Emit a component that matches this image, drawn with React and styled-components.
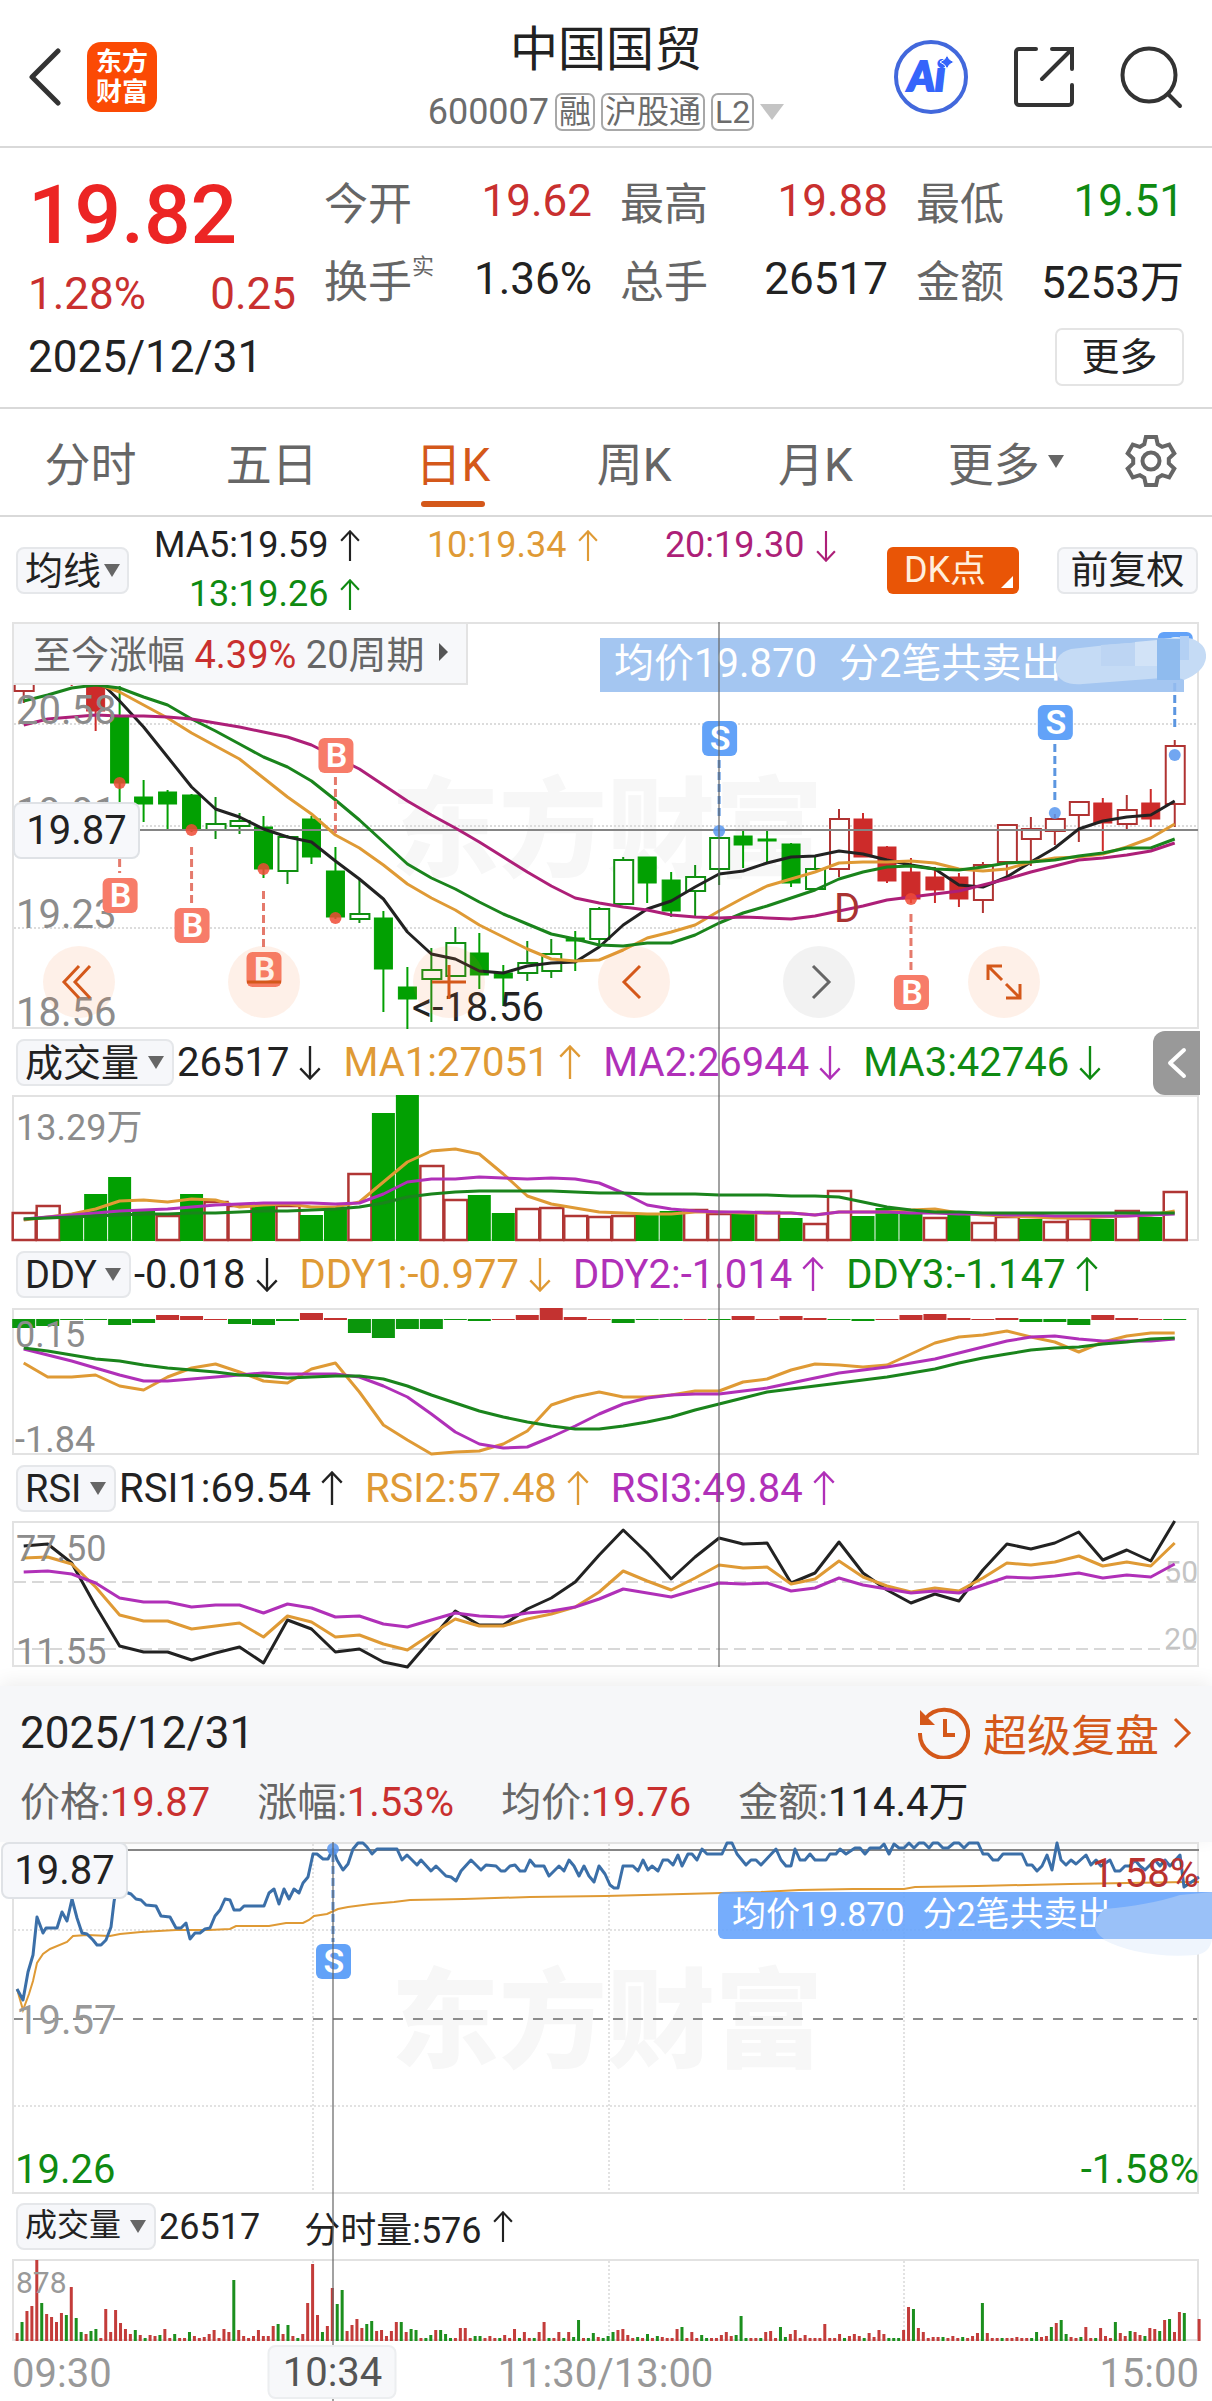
import React from 'react';
import styled, { createGlobalStyle } from 'styled-components';

const GlobalStyle = createGlobalStyle`
* { box-sizing: border-box; }
body {
  margin: 0;
  background: #fff;
  color: #222;
  font-family: Roboto, "Noto Sans CJK SC", sans-serif;
  font-weight: 400;
}
button, select {
  font-family: inherit;
  font-weight: inherit;
  color: inherit;
}
button {
  border: 0;
  padding: 0;
  background: none;
  cursor: pointer;
}
svg { display: block; }
`

const red = '#c9302f';
const green = '#0f8a12';
const orange = '#df9a35';
const purple = '#b030b8';
const magenta = '#ad1f78';
const brand = '#d4581a';

const Page = styled.main`
overflow: hidden;
`

/* ---- header ---- */
const Header = styled.header`
display: grid;
grid-template-columns: 1fr auto 1fr;
align-items: center;
height: 148px;
padding: 0 28px;
border-bottom: 2px solid #d9d9d9;
`
const HeaderSide = styled.div`
display: flex;
align-items: center;
justify-content: ${(p) => (p.$end ? 'flex-end' : 'flex-start')};
gap: ${(p) => (p.$end ? '46px' : '26px')};
padding-top: 8px;
`
const Logo = styled.div`
width: 70px;
height: 70px;
padding-top: 5px;
border-radius: 14px;
background: #fb4a04;
color: #fff;
font-size: 26px;
font-weight: 700;
line-height: 30px;
text-align: center;
`
const TitleBox = styled.div`
padding-top: 16px;
text-align: center;
h1 {
  margin: 0;
  font-size: 48px;
  font-weight: 400;
  line-height: 62px;
}
`
const SubTitle = styled.div`
display: flex;
align-items: center;
justify-content: center;
gap: 6px;
height: 62px;
color: #6c6c6c;
font-size: 36px;
`
const Tag = styled.span`
height: 38px;
padding: 0 2px;
border: 2px solid #a8a8a8;
border-radius: 7px;
font-size: 32px;
line-height: 34px;
`
const Triangle = styled.i`
flex: none;
width: 0;
height: 0;
border-left: ${(p) => p.$w || 8}px solid transparent;
border-right: ${(p) => p.$w || 8}px solid transparent;
border-top: ${(p) => p.$h || 13}px solid ${(p) => p.$color || '#666'};
`

/* ---- quote ---- */
const Quote = styled.section`
padding: 14px 28px 11px;
border-bottom: 2px solid #d9d9d9;
`
const QuoteGrid = styled.div`
display: grid;
grid-template-columns: repeat(4, 1fr);
grid-template-rows: 78px 78px;
column-gap: 28px;
font-size: 44px;
`
const PriceBox = styled.div`
grid-row: span 2;
color: ${red};
strong {
  display: block;
  color: #ec2524;
  font-size: 82px;
  font-weight: 500;
  line-height: 106px;
}
div {
  display: flex;
  justify-content: space-between;
  line-height: 52px;
}
`
const Stat = styled.div`
display: flex;
align-items: center;
justify-content: space-between;
color: ${(p) => p.$color || '#222'};
span { color: #666; white-space: nowrap; }
sup {
  font-size: 22px;
  line-height: 0;
  vertical-align: 24px;
}
`
const DateRow = styled.div`
display: flex;
align-items: center;
justify-content: space-between;
height: 78px;
font-size: 44px;
`
const MoreButton = styled.button`
height: 58px;
width: 129px;
border: 2px solid #e4e4e4;
border-radius: 7px;
font-size: 38px;
line-height: 50px;
`

/* ---- tabs ---- */
const Tabs = styled.nav`
display: flex;
height: 108px;
padding-right: 16px;
border-bottom: 2px solid #d9d9d9;
`
const Tab = styled.button`
position: relative;
display: flex;
flex: ${(p) => p.$grow || 10};
align-items: center;
justify-content: center;
gap: 8px;
padding-bottom: 2px;
color: ${(p) => (p.$active ? brand : '#666')};
font-size: 46px;
&::after {
  content: '';
  position: absolute;
  bottom: 8px;
  width: 64px;
  height: 6px;
  border-radius: 3px;
  background: ${(p) => (p.$active ? brand : 'transparent')};
}
`

/* ---- moving averages ---- */
const AverageBar = styled.div`
display: flex;
align-items: center;
justify-content: space-between;
padding: 4px 14px 3px 16px;
`
const AverageGrid = styled.div`
display: grid;
flex: 1;
grid-template-columns: repeat(3, 1fr);
max-width: 714px;
margin-left: -7px;
justify-items: end;
font-size: 36px;
line-height: 49px;
`
const Reading = styled.span`
display: flex;
align-items: center;
gap: 10px;
color: ${(p) => p.$color || '#222'};
white-space: nowrap;
`
const AverageButtons = styled.div`
display: flex;
gap: 38px;
margin-left: 50px;
`
const DkButton = styled.button`
position: relative;
width: 132px;
height: 47px;
padding-right: 16px;
border-radius: 6px;
background: #e95506;
color: #ffeedd;
font-size: 36px;
line-height: 44px;
&::after {
  content: '';
  position: absolute;
  right: 6px;
  bottom: 6px;
  border-left: 12px solid transparent;
  border-bottom: 12px solid #fff;
}
`
const GreyButton = styled.button`
height: 47px;
width: 141px;
border: 2px solid #e5e7ea;
border-radius: 7px;
background: #f7f8fb;
font-size: 38px;
line-height: 40px;
`
const SelectBox = styled.label`
position: relative;
display: flex;
align-items: center;
i { position: absolute; right: ${(p) => (p.$tight ? 9 : 10)}px; pointer-events: none; }
select {
  height: 47px;
  padding: 0 ${(p) => (p.$tight ? 25 : 32)}px 4px 7px;
  border: 2px solid #e5e7ea;
  border-radius: 8px;
  background: #f6f7fa;
  font-size: ${(p) => (p.$small ? 32 : 38)}px;
  appearance: none;
}
`

/* ---- charts ---- */
const Charts = styled.section`
position: relative;
padding: 0 13px 19px 12px;
`
const Frame = styled.div`
position: relative;
svg { width: 100%; height: auto; overflow: visible; }
`
const IndicatorRow = styled.div`
display: flex;
align-items: center;
gap: ${(p) => p.$gap || 22}px;
height: ${(p) => p.$h || 66}px;
padding-left: 4px;
font-size: ${(p) => p.$size || 40}px;
label { margin-right: ${(p) => 3 - (p.$gap || 22)}px; }
`
const CrossLine = styled.div`
position: absolute;
z-index: 2;
top: 0;
bottom: ${(p) => p.$bottom || 0}px;
left: ${(p) => p.$left};
width: 2px;
background: rgba(100, 100, 100, 0.6);
`
const GainStrip = styled.button`
position: absolute;
top: 0;
left: 0;
display: flex;
align-items: center;
gap: 14px;
height: 63px;
padding: 0 18px 4px 19px;
border: 2px solid #e3e3e3;
background: #f7f8fa;
color: #666;
font-size: 38px;
em { color: ${red}; font-style: normal; }
i {
  border-top: 9px solid transparent;
  border-bottom: 9px solid transparent;
  border-left: 9px solid #555;
}
`
const PriceTag = styled.output`
position: absolute;
top: ${(p) => p.$top}px;
left: ${(p) => p.$left}px;
width: 127px;
height: 57px;
border: 2px solid #dfe2e6;
border-radius: 8px;
background: #f7f8fb;
font-size: 40px;
line-height: 54px;
text-align: center;
`
const TradeTip = styled.div`
position: absolute;
top: ${(p) => (p.$small ? 50 : 16)}px;
right: ${(p) => (p.$small ? -13 : 15)}px;
display: flex;
gap: ${(p) => (p.$small ? 18 : 22)}px;
width: ${(p) => (p.$small ? 494 : 584)}px;
height: ${(p) => (p.$small ? 47 : 54)}px;
padding-left: 14px;
border-radius: ${(p) => (p.$small ? '6px 0 0 6px' : 0)};
background: ${(p) => (p.$small ? 'rgba(103, 164, 252, 0.9)' : 'rgba(151, 190, 239, 0.88)')};
color: #fff;
font-size: ${(p) => (p.$small ? 34 : 40)}px;
line-height: ${(p) => (p.$small ? 44 : 52)}px;
white-space: nowrap;
svg {
  position: absolute;
  top: ${(p) => (p.$small ? 7 : -14)}px;
  right: ${(p) => (p.$small ? 0 : -23)}px;
  width: auto;
}
`
const RoundBar = styled.div`
position: absolute;
top: 324px;
left: 31px;
display: flex;
gap: 113px;
`
const RoundButton = styled.button`
display: flex;
align-items: center;
justify-content: center;
width: 72px;
height: 72px;
border-radius: 50%;
background: ${(p) => (p.$grey ? 'rgba(110, 110, 110, 0.09)' : 'rgba(250, 120, 50, 0.11)')};
color: ${(p) => (p.$grey ? '#666' : brand)};
&& svg { width: 40px; height: 40px; }
`
const SideTab = styled.button`
position: absolute;
top: 409px;
right: 12px;
display: flex;
align-items: center;
justify-content: center;
width: 47px;
height: 64px;
border-radius: 12px 0 0 12px;
background: #999;
`

/* ---- intraday panel ---- */
const PanelHead = styled.section`
position: relative;
padding: 20px 20px 4px;
background: #f6f7f9;
box-shadow: 0 -4px 18px rgba(0, 0, 0, 0.07);
`
const PanelTitle = styled.div`
display: flex;
align-items: center;
justify-content: space-between;
height: 54px;
font-size: 44px;
`
const Replay = styled.a`
display: flex;
align-items: center;
gap: 13px;
color: ${brand};
text-decoration: none;
`
const PanelFigures = styled.div`
display: flex;
align-items: center;
gap: 47px;
height: 78px;
font-size: 40px;
span { color: #666; }
b { color: ${red}; font-weight: 400; }
b.plain { color: #222; }
`
const Intraday = styled.section`
position: relative;
padding: 0 13px 0 12px;
`
const TimeAxis = styled.div`
position: relative;
display: flex;
align-items: center;
justify-content: space-between;
height: 60px;
padding-top: 4px;
color: #999;
font-size: 40px;
`
const TimeTag = styled.output`
position: absolute;
z-index: 3;
bottom: 2px;
left: 27%;
width: 129px;
height: 54px;
transform: translateX(-50%);
border: 2px solid #eceef0;
border-radius: 8px;
background: #f7f8fa;
color: #555;
font-size: 40px;
line-height: 52px;
text-align: center;
`

/* ---- data: 49 daily bars, pixel heights inside each chart ---- */
// kind (g/G down solid/hollow, r/R up solid/hollow), body top, body bottom, high, low
const candles = [
  ['R', 40, 69, 30, 81], null, ['r', 20, 50, 20, 64], ['r', 50, 89, 50, 109],
  ['g', 94, 161, 64, 180], ['g', 175, 182, 158, 200], ['g', 170, 182, 168, 209], ['g', 173, 208, 172, 210],
  ['G', 202, 208, 175, 217], ['G', 199, 204, 191, 212], ['g', 205, 247, 194, 256], ['G', 215, 249, 213, 262],
  ['g', 197, 235, 194, 242], ['g', 249, 295, 225, 297], ['G', 292, 297, 257, 301], ['g', 296, 347, 289, 390],
  ['g', 365, 377, 345, 407], ['G', 348, 357, 326, 400], ['G', 321, 354, 305, 354], ['g', 331, 353, 311, 367],
  ['g', 351, 356, 343, 384], ['G', 341, 351, 319, 359], ['G', 332, 349, 317, 356], ['g', 316, 319, 309, 349],
  ['G', 287, 317, 285, 325], ['G', 238, 282, 235, 283], ['g', 235, 261, 235, 281], ['g', 258, 289, 250, 295],
  ['G', 255, 269, 243, 294], ['G', 216, 247, 215, 263], ['g', 214, 223, 208, 246], ['g', 217, 219, 207, 240],
  ['g', 222, 261, 221, 265], ['G', 247, 267, 234, 267], ['R', 197, 247, 187, 255], ['r', 197, 235, 191, 235],
  ['r', 225, 259, 224, 261], ['r', 250, 277, 236, 281], ['r', 255, 268, 245, 281], ['r', 255, 277, 251, 285],
  ['R', 243, 278, 240, 291], ['R', 203, 240, 202, 257], ['R', 207, 217, 195, 244], ['R', 197, 209, 192, 223],
  ['R', 180, 193, 179, 220], ['r', 181, 201, 176, 229], ['R', 188, 202, 173, 207], ['r', 181, 197, 167, 205],
  ['R', 124, 182, 118, 205],
];
const ma5 = [null, null, null, 55, 79, 105, 135, 165, 187, 195, 207, 215, 220, 239, 257, 277, 310, 332, 337, 349, 351, 344, 341, 340, 325, 303, 287, 279, 265, 252, 249, 241, 235, 234, 229, 232, 238, 243, 247, 263, 265, 255, 240, 226, 207, 199, 195, 193, 179];
const ma10 = [null, null, null, 61, 70, 83, 96, 111, 124, 137, 156, 175, 192, 213, 226, 243, 262, 276, 288, 303, 315, 327, 337, 339, 338, 328, 316, 310, 303, 289, 276, 264, 257, 250, 241, 240, 240, 239, 241, 247, 249, 247, 240, 236, 235, 232, 225, 216, 202];
const ma13 = [79, 73, 66, 63, 66, 75, 83, 97, 109, 122, 135, 145, 159, 178, 198, 220, 242, 256, 267, 280, 292, 302, 312, 317, 323, 324, 321, 321, 313, 301, 291, 284, 276, 268, 257, 250, 245, 244, 247, 248, 245, 241, 240, 238, 234, 231, 226, 226, 217];
const ma20 = [103, 97, 95, 93, 94, 94, 95, 97, 101, 105, 110, 115, 123, 135, 147, 163, 179, 193, 206, 220, 235, 250, 264, 276, 281, 285, 288, 293, 295, 296, 295, 296, 297, 294, 289, 284, 278, 275, 272, 269, 263, 257, 250, 244, 238, 236, 233, 229, 221];

const volumes = 'R29 R36 g25 g47 g64 g30 R26 g47 R40 R36 g36 R36 g26 g33 R68 g128 g146 R76 R42 g46 g28 R33 R34 R26 R25 R26 g26 g30 R32 R28 g28 R30 g23 R18 R51 g25 g33 g29 R24 g26 R19 R25 g22 R20 R23 g22 R31 g24 R50';
const vol1 = [125, 122, 119, 114, 106, 105, 107, 104, 105, 112, 110, 109, 112, 112, 107, 87, 67, 56, 54, 59, 79, 101, 109, 113, 117, 118, 119, 119, 117, 117, 118, 118, 118, 120, 117, 117, 117, 115, 114, 118, 120, 121, 122, 123, 123, 122, 121, 120, 116];
const vol2 = [124, 122, 120, 118, 116, 115, 114, 112, 110, 109, 108, 108, 108, 109, 108, 99, 87, 84, 84, 82, 83, 84, 83, 84, 88, 98, 110, 114, 116, 117, 117, 118, 118, 120, 117, 117, 117, 118, 118, 119, 119, 120, 120, 121, 121, 121, 121, 120, 119];
const vol3 = [124, 123, 122, 121, 120, 119, 119, 118, 118, 117, 116, 116, 115, 114, 112, 108, 102, 99, 97, 96, 96, 96, 96, 97, 98, 98, 99, 99, 99, 100, 100, 100, 101, 101, 102, 107, 112, 115, 117, 117, 118, 118, 118, 118, 118, 118, 118, 118, 118];

const ddyBars = [-9, -7, -1, -1, -6, -4, 5, 4, 1, -5, -6, -2, 7, 2, -14, -19, -10, -10, -1, -2, 1, 5, 12, 3, 1, -4, -1, -1, 1, -1, 4, 1, 4, 2, -1, -2, 1, 5, 6, 2, 1, 2, -3, -3, -6, 5, 2, 1, -1];
const ddy1 = [55, 69, 69, 67, 78, 82, 69, 60, 56, 64, 73, 75, 61, 55, 84, 117, 132, 146, 144, 143, 136, 123, 97, 89, 84, 89, 89, 87, 83, 83, 74, 71, 62, 56, 57, 59, 57, 46, 35, 29, 27, 23, 29, 34, 44, 34, 28, 25, 25];
const ddy2 = [41, 47, 53, 60, 67, 73, 73, 71, 69, 67, 65, 66, 66, 66, 69, 78, 89, 106, 124, 136, 140, 139, 129, 118, 106, 96, 90, 87, 86, 86, 83, 80, 75, 70, 65, 62, 59, 55, 51, 45, 39, 33, 29, 28, 31, 33, 33, 33, 31];
const ddy3 = [40, 43, 47, 51, 53, 57, 60, 62, 64, 67, 68, 70, 69, 68, 68, 71, 78, 87, 95, 103, 109, 114, 118, 121, 121, 118, 114, 109, 102, 96, 90, 84, 81, 78, 75, 72, 69, 65, 61, 55, 50, 46, 42, 40, 39, 36, 34, 31, 30];

const rsi1 = [25, 23, 42, 85, 125, 131, 131, 139, 132, 126, 142, 99, 108, 131, 128, 141, 146, 118, 90, 104, 104, 88, 77, 61, 34, 9, 32, 58, 36, 17, 23, 22, 62, 52, 21, 52, 69, 82, 73, 80, 49, 23, 28, 22, 11, 39, 29, 40, 0];
const rsi2 = [37, 36, 43, 66, 94, 100, 100, 108, 105, 102, 116, 95, 101, 116, 114, 123, 129, 113, 98, 105, 105, 98, 93, 86, 71, 50, 60, 69, 57, 44, 47, 46, 63, 58, 40, 56, 65, 71, 67, 70, 57, 42, 44, 41, 35, 45, 41, 45, 22];
const rsi3 = [51, 50, 53, 62, 77, 81, 81, 86, 84, 84, 92, 83, 87, 96, 95, 103, 106, 99, 92, 95, 96, 92, 90, 86, 78, 68, 72, 76, 69, 62, 63, 62, 70, 67, 57, 64, 68, 72, 70, 72, 64, 56, 57, 55, 52, 57, 54, 56, 43];

// one day, minute by minute
const pricePath = '5,147 11,158 16,130 21,113 25,75 31,91 34,86 45,86 50,70 55,79 60,57 65,76 70,91 75,92 81,98 85,103 89,103 94,98 99,85 102,60 104,48 109,46 116,51 119,52 124,57 129,58 134,63 144,64 149,74 158,75 164,86 169,86 174,81 178,97 183,91 188,91 193,87 198,86 203,74 208,68 213,57 218,58 222,68 228,68 232,64 252,64 257,51 262,47 267,62 272,47 277,57 282,47 287,51 291,41 296,35 301,12 305,12 311,17 316,17 321,7 325,18 331,28 336,22 341,7 346,1 351,1 355,5 360,12 365,7 385,7 390,18 395,13 405,23 409,18 419,29 424,24 434,34 439,35 444,39 449,29 459,18 469,28 474,23 484,24 489,29 493,29 498,24 503,23 508,29 513,29 518,18 523,24 532,24 537,34 547,24 552,29 557,18 562,24 567,34 572,24 577,34 582,40 587,24 593,32 598,43 602,46 606,46 611,24 621,24 626,29 631,18 636,28 640,24 646,29 651,18 656,18 661,23 666,13 670,24 676,12 680,12 685,18 690,7 695,12 710,12 715,1 720,1 725,12 734,23 739,18 744,18 749,23 764,7 769,18 774,24 779,24 783,7 788,18 793,18 798,12 803,18 814,18 818,12 824,12 828,7 834,12 843,6 848,6 853,12 858,6 868,6 872,2 877,12 882,2 887,6 892,6 897,1 902,6 907,1 912,1 917,6 921,1 926,1 931,6 936,6 942,1 947,1 952,6 957,1 966,1 971,12 976,12 981,18 986,18 991,12 1010,12 1015,23 1020,23 1025,29 1030,24 1035,13 1040,28 1045,1 1049,18 1054,23 1059,18 1064,22 1074,13 1079,23 1084,18 1089,24 1098,18 1103,29 1108,29 1113,24 1118,24 1123,18 1128,24 1133,28 1143,18 1148,24 1153,18 1158,24 1168,13 1172,45 1187,35';
const averagePath = '5,147 11,168 17,152 21,139 25,121 31,112 38,107 55,100 61,94 75,93 98,94 108,92 129,90 164,88 197,88 218,87 224,84 257,84 274,81 291,81 297,78 302,74 315,72 326,67 336,65 359,62 382,60 398,58 452,57 518,55 593,54 671,52 749,50 787,48 841,47 892,47 903,45 965,44 1058,42 1174,40 1187,40';
const minuteBars = 'r8 g19 r30 r35 r81 g38 r27 r24 r19 r28 g26 r54 g23 g9 r7 g10 g12 r3 r32 r9 r31 r18 r12 r7 g11 r6 g3 r6 r5 g6 r12 r3 g7 r3 r3 g9 r5 r3 r4 r7 r11 r3 r12 r9 g61 r11 r5 r3 r5 r11 r5 r5 r15 g17 r7 g16 r5 g3 r7 r38 r77 r26 g9 r15 r53 g37 g51 r10 r16 r22 r13 g17 g20 r10 r11 r5 r10 r19 g19 r9 g12 g11 r3 g3 g6 r11 g11 g7 g3 r3 r13 r13 r3 g5 g5 r3 r5 r3 g3 r6 r3 r12 g3 r9 r3 g3 r9 r19 g3 r3 r9 g3 r9 g4 g21 r3 g3 g8 r4 g3 g5 g9 r11 r12 r6 r3 g4 r3 g7 r3 g5 r4 r3 r3 r12 g14 r3 r9 r3 g6 g3 r3 r3 r6 r9 r5 g6 g25 g3 r3 r3 g3 r9 r10 r3 g14 g4 r7 r11 r3 r6 r3 r3 r3 r17 r3 r3 r7 g3 r5 r7 r5 g3 r8 r4 r11 r7 g3 g3 g3 r11 r34 g32 r13 r9 r3 r4 r4 g4 r3 r5 r3 g4 r3 r5 r8 g38 r8 r3 r3 g3 r3 r3 r4 r3 r3 g3 g9 r4 r5 g14 r18 g21 g7 r4 r3 g4 r14 r3 g3 r13 r5 r3 g19 r8 r5 g10 r9 r6 g5 r13 r12 g10 r21 g22 r9 r29 g28 r0 r0 r22';

const xAt = (i) => 11.7 + i * 23.98;
const toPoints = (list) =>
  list.map((y, i) => (y === null ? null : `${xAt(i).toFixed(1)},${y}`)).filter(Boolean).join(' ');
const parseBars = (text) => text.split(' ').map((t) => ({ kind: t[0], h: Number(t.slice(1)) }));

function Line({ data, color, width = 3 }) {
  return <polyline points={toPoints(data)} fill="none" stroke={color} strokeWidth={width} strokeLinejoin="round" />;
}

function Border({ h }) {
  return <rect x="1" y="1" width="1185" height={h - 2} fill="none" stroke="#e2e2e2" strokeWidth="2" />;
}

function ChartText({ x, y, size = 36, color = '#8c8c8c', anchor = 'start', children }) {
  return <text x={x} y={y} fontSize={size} fill={color} textAnchor={anchor}>{children}</text>;
}

function Watermark({ y }) {
  return <text x="379" y={y} fontSize="108" fontWeight="900" fill="#f7f7f7">东方财富</text>;
}

function Candle({ i, bar }) {
  if (!bar) return null;
  const [kind, top, bottom, high, low] = bar;
  const x = xAt(i);
  const up = kind.toLowerCase() === 'r';
  const hollow = kind === 'R' || kind === 'G';
  const color = up ? (hollow ? '#b03332' : '#cd2b2a') : (hollow ? '#0f8f10' : '#02a002');
  return (
    <g stroke={color} strokeWidth="2">
      <line x1={x} x2={x} y1={high} y2={hollow ? top : low} />
      {hollow && <line x1={x} x2={x} y1={bottom} y2={low} />}
      <rect x={x - 9} y={top} width={hollow ? 19 : 18} height={bottom - top} fill={hollow ? '#fff' : color} strokeWidth={hollow ? 2 : 1} />
    </g>
  );
}

// trade marker: badge, dashed leader and the dot on the bar
function Marker({ x, y, from, to, dot, sell }) {
  const color = sell ? '#62a2f8' : '#f77c69';
  return (
    <g>
      <line x1={x} x2={x} y1={from} y2={to} stroke={sell ? '#5c96e0' : '#e57a6c'} strokeWidth="3" strokeDasharray="8 4" />
      {dot && <circle cx={x} cy={dot} r="6" fill={sell ? '#5896ee' : '#ef4a35'} fillOpacity="0.85" />}
      <rect x={x - 17} y={y - 17} width="35" height="35" rx="6" fill={color} />
      <text x={x + 1} y={y + 12} fontSize="34" fontWeight="600" fill="#fff" textAnchor="middle">{sell ? 'S' : 'B'}</text>
    </g>
  );
}

function Arrow({ down, size = 35 }) {
  return (
    <svg width="22" height={size} viewBox="0 0 22 36" fill="none" stroke="currentColor" strokeWidth="2.4">
      <path d={down ? 'M11 1v33M1 24l10 10.500L21 24' : 'M11 35V2M1 12L11 1.500 21 12'} />
    </svg>
  );
}

function Value({ color, down, size, children }) {
  return <Reading $color={color}>{children}<Arrow down={down} size={size} /></Reading>;
}

function Picker({ name, label, small, tight }) {
  return (
    <SelectBox $small={small} $tight={tight}>
      <select aria-label={label} defaultValue={name}>
        <option>{name}</option>
      </select>
      <Triangle />
    </SelectBox>
  );
}

function Gear() {
  const points = [];
  for (let k = 0; k < 6; k++) {
    [[-22, 18], [-12, 24.5], [12, 24.5], [22, 18]].forEach(([a, r]) => {
      const t = ((k * 60 + a - 90) * Math.PI) / 180;
      points.push(`${(28 + r * Math.cos(t)).toFixed(1)},${(28 + r * Math.sin(t)).toFixed(1)}`);
    });
  }
  return (
    <svg width="56" height="56" viewBox="0 0 56 56" fill="none" stroke="#666" strokeWidth="4">
      <polygon points={points.join(' ')} />
      <circle cx="28" cy="28" r="8.500" />
    </svg>
  );
}

function TopBar() {
  return (
    <Header>
      <HeaderSide>
        <button aria-label="返回">
          <svg width="33" height="58" viewBox="0 0 33 58" fill="none" stroke="#333" strokeWidth="5" strokeLinecap="round" strokeLinejoin="round">
            <path d="M30 3L4 29l26 26" />
          </svg>
        </button>
        <Logo>东方<br />财富</Logo>
      </HeaderSide>
      <TitleBox>
        <h1>中国国贸</h1>
        <SubTitle>
          600007 <Tag>融</Tag><Tag>沪股通</Tag><Tag>L2</Tag>
          <Triangle $w={12} $h={16} $color="#c4c4c4" />
        </SubTitle>
      </TitleBox>
      <HeaderSide $end>
        <button aria-label="AI">
          <svg width="74" height="74" viewBox="0 0 74 74">
            <circle cx="37" cy="37" r="35" fill="none" stroke="#4268dc" strokeWidth="4" />
            <text x="14" y="51" fontFamily="Lato, sans-serif" fontSize="41" fontWeight="900" fontStyle="italic" fill="#3565fb" stroke="#3565fb" strokeWidth="2">Ai</text>
            <path d="M53 15q1.500 5 7 7-5.500 2-7 7-1.500-5-7-7 5.500-2 7-7z" fill="#3565fb" stroke="#fff" strokeWidth="1" />
          </svg>
        </button>
        <button aria-label="分享">
          <svg width="60" height="60" viewBox="0 0 60 60" fill="none" stroke="#333" strokeWidth="4" strokeLinecap="round">
            <path d="M22 2H5a3 3 0 0 0-3 3v50a3 3 0 0 0 3 3h50a3 3 0 0 0 3-3V38M38 2h20v20M57 3L28 32" />
          </svg>
        </button>
        <button aria-label="搜索">
          <svg width="64" height="64" viewBox="0 0 64 64" fill="none" stroke="#333" strokeWidth="4" strokeLinecap="round">
            <circle cx="29" cy="30" r="26.500" />
            <path d="M48 49l12 12" />
          </svg>
        </button>
      </HeaderSide>
    </Header>
  );
}

function QuoteBlock() {
  return (
    <Quote>
      <QuoteGrid>
        <PriceBox>
          <strong>19.82</strong>
          <div><span>1.28%</span><span>0.25</span></div>
        </PriceBox>
        <Stat $color={red}><span>今开</span>19.62</Stat>
        <Stat $color={red}><span>最高</span>19.88</Stat>
        <Stat $color={green}><span>最低</span>19.51</Stat>
        <Stat><span>换手<sup>实</sup></span>1.36%</Stat>
        <Stat><span>总手</span>26517</Stat>
        <Stat><span>金额</span>5253万</Stat>
      </QuoteGrid>
      <DateRow>
        <time>2025/12/31</time>
        <MoreButton>更多</MoreButton>
      </DateRow>
    </Quote>
  );
}

function DayChart() {
  return (
    <Frame>
      <svg viewBox="0 0 1187 407">
        <Watermark y={246} />
        <g stroke="#dcdcdc" strokeWidth="2" strokeDasharray="2 2">
          <path d="M2 102H1186M2 204H1186M2 306H1186" />
        </g>
        <Border h={407} />
        {candles.map((bar, i) => <Candle key={i} i={i} bar={bar} />)}
        <path d="M128 208H1186" stroke="#858585" strokeWidth="2" />
        <Line data={ma5} color="#222" />
        <Line data={ma10} color={orange} />
        <Line data={ma13} color="#1a841c" />
        <Line data={ma20} color={magenta} />
        <ChartText x={4} y={102} size={40}>20.58</ChartText>
        <ChartText x={4} y={204} size={40}>19.91</ChartText>
        <ChartText x={4} y={306} size={40}>19.23</ChartText>
        <ChartText x={4} y={404} size={40}>18.56</ChartText>
        <ChartText x={822} y={300} size={40} color="#a93232">D</ChartText>
        <ChartText x={400} y={399} size={40} color="#222">&lt;-18.56</ChartText>
        <Marker x={xAt(4)} y={273} from={225} to={251} dot={161} />
        <Marker x={xAt(7)} y={303} from={225} to={281} dot={208} />
        <Marker x={xAt(10)} y={347} from={269} to={325} dot={247} />
        <Marker x={xAt(13)} y={133} from={155} to={212} dot={296} />
        <Marker x={xAt(37)} y={370} from={292} to={348} dot={277} />
        <Marker x={xAt(29)} y={116} from={138} to={194} dot={209} sell />
        <Marker x={xAt(43)} y={100} from={122} to={178} dot={191} sell />
        <Marker x={xAt(48)} y={27} from={61} to={105} dot={133} sell />
      </svg>
      <GainStrip>
        <span>至今涨幅 <em>4.39%</em> 20周期</span><i />
      </GainStrip>
      <TradeTip>
        <span>均价19.870</span><span>分2笔共卖出</span>
        <svg width="154" height="62" viewBox="0 0 154 62">
          <path d="M18 25Q60 20 102 17 130 10 142 16q12 6 11 18-2 14-22 22-4-3-22-2L30 60Q8 62 3 48 0 30 18 25z" fill="#c5dbf5" />
          <path d="M48 21l56-4v25H48z" fill="#bdd5f3" />
          <path d="M82 18l22-2v26H82z" fill="#d2e3f7" />
          <path d="M104 15h23v41h-23z" fill="#8fbbee" />
          <path d="M127 12h9v24h-9z" fill="#b3d0f4" />
        </svg>
      </TradeTip>
      <PriceTag $top={180} $left={1}>19.87</PriceTag>
      <RoundBar>
        <RoundButton aria-label="最早">
          <svg viewBox="0 0 40 40" fill="none" stroke="currentColor" strokeWidth="3"><path d="M20 4L5 20l15 16M31 4L16 20l15 16" /></svg>
        </RoundButton>
        <RoundButton aria-label="缩小">
          <svg viewBox="0 0 40 40" fill="none" stroke="currentColor" strokeWidth="3"><path d="M3 20h34" /></svg>
        </RoundButton>
        <RoundButton aria-label="放大">
          <svg viewBox="0 0 40 40" fill="none" stroke="currentColor" strokeWidth="3"><path d="M3 20h34M20 3v34" /></svg>
        </RoundButton>
        <RoundButton aria-label="向前">
          <svg viewBox="0 0 40 40" fill="none" stroke="currentColor" strokeWidth="3"><path d="M26 4L10 20l16 16" /></svg>
        </RoundButton>
        <RoundButton $grey aria-label="向后">
          <svg viewBox="0 0 40 40" fill="none" stroke="currentColor" strokeWidth="3"><path d="M14 4l16 16-16 16" /></svg>
        </RoundButton>
        <RoundButton aria-label="全屏">
          <svg viewBox="0 0 40 40" fill="none" stroke="currentColor" strokeWidth="3"><path d="M4 18V4h14M4 4l14 14M22 36h14V22M36 36L22 22" /></svg>
        </RoundButton>
      </RoundBar>
    </Frame>
  );
}

function VolumeChart() {
  return (
    <Frame>
      <svg viewBox="0 0 1187 146">
        <Border h={146} />
        {parseBars(volumes).map(({ kind, h }, i) => (
          kind === 'g'
            ? <rect key={i} x={xAt(i) - 11.5} y={146 - h} width="23" height={h} fill="#02a002" />
            : <rect key={i} x={xAt(i) - 11} y={147 - h} width="23" height={h - 2} fill="#fff" stroke="#b03634" strokeWidth="2.500" />
        ))}
        <Line data={vol1} color={orange} />
        <Line data={vol2} color={purple} />
        <Line data={vol3} color="#1a841c" />
        <ChartText x={4} y={45}>13.29万</ChartText>
      </svg>
    </Frame>
  );
}

function DdyChart() {
  return (
    <Frame>
      <svg viewBox="0 0 1187 147">
        <Border h={147} />
        {ddyBars.map((v, i) => (
          <rect key={i} x={xAt(i) - 11.5} y={v > 0 ? 12 - v : 11} width="23" height={Math.abs(v)} fill={v > 0 ? '#c33230' : '#0b960c'} />
        ))}
        <Line data={ddy1} color={orange} />
        <Line data={ddy2} color={purple} />
        <Line data={ddy3} color="#1a841c" />
        <ChartText x={3} y={39}>0.15</ChartText>
        <ChartText x={3} y={144}>-1.84</ChartText>
      </svg>
    </Frame>
  );
}

function RsiChart() {
  return (
    <Frame>
      <svg viewBox="0 0 1187 146">
        <path d="M2 61H1186M2 128H1186" stroke="#d8d8d8" strokeWidth="2" strokeDasharray="12 6" />
        <Border h={146} />
        <ChartText x={1186} y={61} size={30} color="#c4c4c4" anchor="end">50</ChartText>
        <ChartText x={1186} y={128} size={30} color="#c4c4c4" anchor="end">20</ChartText>
        <Line data={rsi1} color="#222" />
        <Line data={rsi2} color={orange} />
        <Line data={rsi3} color={purple} />
        <ChartText x={4} y={40}>77.50</ChartText>
        <ChartText x={4} y={143}>11.55</ChartText>
      </svg>
    </Frame>
  );
}

function PriceChart() {
  return (
    <Frame>
      <svg viewBox="0 0 1187 352">
        <Watermark y={217} />
        <path d="M2 88H1186M2 264H1186M301 2V350M597 2V350M892 2V350" stroke="#e2e2e2" strokeWidth="2" strokeDasharray="2 2" />
        <path d="M1 177H1186" stroke="#8c8c8c" strokeWidth="2" strokeDasharray="10 10" />
        <Border h={352} />
        <path d="M0 8H1187" stroke="#858585" strokeWidth="2" />
        <polyline points={averagePath} fill="none" stroke={orange} strokeWidth="2" />
        <polyline points={pricePath} fill="none" stroke="#3b6fa8" strokeWidth="3" strokeLinejoin="round" />
        <ChartText x={4} y={192} size={40} color="#999">19.57</ChartText>
        <ChartText x={3} y={341} size={40} color={green}>19.26</ChartText>
        <ChartText x={1187} y={45} size={40} color="#b93230" anchor="end">1.58%</ChartText>
        <ChartText x={1187} y={341} size={40} color={green} anchor="end">-1.58%</ChartText>
        <Marker x={321} y={119} from={12} to={100} dot={7} sell />
      </svg>
      <TradeTip $small>
        <span>均价19.870</span><span>分2笔共卖出</span>
        <svg width="122" height="60" viewBox="0 0 122 60">
          <path d="M14 10Q60 6 90-4l32-3V40H14Q-4 28 14 10z" fill="#9ac1f8" />
          <path d="M12 40H122q-2 14-16 16Q50 60 12 40z" fill="#eff5fd" />
        </svg>
      </TradeTip>
      <PriceTag $top={0} $left={-11}>19.87</PriceTag>
    </Frame>
  );
}

function MinuteVolume() {
  return (
    <Frame>
      <svg viewBox="0 0 1187 82">
        <path d="M301 2V80M597 2V80M892 2V80" stroke="#e2e2e2" strokeWidth="2" strokeDasharray="2 2" />
        <Border h={82} />
        {parseBars(minuteBars).map(({ kind, h }, i) => (
          <rect key={i} x={3.6 + i * 4.925} y={82 - h} width="3" height={h} fill={kind === 'g' ? '#1c8f1e' : '#c33c3a'} />
        ))}
        <ChartText x={4} y={34} size={30} color="#999">878</ChartText>
      </svg>
    </Frame>
  );
}

function App() {
  return (
    <Page>
      <GlobalStyle />
      <TopBar />
      <QuoteBlock />
      <Tabs>
        <Tab>分时</Tab>
        <Tab>五日</Tab>
        <Tab $active>日K</Tab>
        <Tab>周K</Tab>
        <Tab>月K</Tab>
        <Tab $grow={11}>更多<Triangle /></Tab>
        <Tab $grow={5} aria-label="设置"><Gear /></Tab>
      </Tabs>
      <AverageBar>
        <Picker name="均线" label="主图指标" tight />
        <AverageGrid>
          <Value size={32}>MA5:19.59</Value>
          <Value size={32} color={orange}>10:19.34</Value>
          <Value size={32} color={magenta} down>20:19.30</Value>
          <Value size={32} color={green}>13:19.26</Value>
        </AverageGrid>
        <AverageButtons>
          <DkButton>DK点</DkButton>
          <GreyButton>前复权</GreyButton>
        </AverageButtons>
      </AverageBar>

      <Charts>
        <CrossLine $left="59.2%" $bottom={19} />
        <DayChart />
        <IndicatorRow>
          <Picker name="成交量" label="副图指标一" />
          <Value down>26517</Value>
          <Value color={orange}>MA1:27051</Value>
          <Value color={purple} down>MA2:26944</Value>
          <Value color={green} down>MA3:42746</Value>
        </IndicatorRow>
        <SideTab aria-label="展开">
          <svg width="22" height="32" viewBox="0 0 22 32" fill="none" stroke="#fff" strokeWidth="4" strokeLinecap="round" strokeLinejoin="round"><path d="M18 3L4 16l14 13" /></svg>
        </SideTab>
        <VolumeChart />
        <IndicatorRow $h={67}>
          <Picker name="DDY" label="副图指标二" />
          <Value down>-0.018</Value>
          <Value color={orange} down>DDY1:-0.977</Value>
          <Value color={purple}>DDY2:-1.014</Value>
          <Value color={green}>DDY3:-1.147</Value>
        </IndicatorRow>
        <DdyChart />
        <IndicatorRow>
          <Picker name="RSI" label="副图指标三" />
          <Value>RSI1:69.54</Value>
          <Value color={orange}>RSI2:57.48</Value>
          <Value color={purple}>RSI3:49.84</Value>
        </IndicatorRow>
        <RsiChart />
      </Charts>

      <PanelHead>
        <PanelTitle>
          <time>2025/12/31</time>
          <Replay href="#replay">
            <svg width="52" height="52" viewBox="0 0 52 52" fill="none" stroke="currentColor" strokeWidth="4">
              <path d="M2 26a24 24 0 1 0 5-14" />
              <path d="M2 3v15h15z" fill="currentColor" stroke="none" />
              <path d="M27 12v16h10" />
            </svg>
            超级复盘
            <svg width="20" height="34" viewBox="0 0 20 34" fill="none" stroke="currentColor" strokeWidth="3"><path d="M3 3l14 14L3 31" /></svg>
          </Replay>
        </PanelTitle>
        <PanelFigures>
          <div><span>价格:</span><b>19.87</b></div>
          <div><span>涨幅:</span><b>1.53%</b></div>
          <div><span>均价:</span><b>19.76</b></div>
          <div><span>金额:</span><b className="plain">114.4万</b></div>
        </PanelFigures>
      </PanelHead>

      <Intraday>
        <CrossLine $left="27.4%" />
        <PriceChart />
        <IndicatorRow $h={65} $size={36} $gap={44}>
          <Picker name="成交量" label="分时指标" small />
          <Reading>26517</Reading>
          <Value size={32}>分时量:576</Value>
        </IndicatorRow>
        <MinuteVolume />
        <TimeAxis>
          <span>09:30</span><span>11:30/13:00</span><span>15:00</span>
          <TimeTag>10:34</TimeTag>
        </TimeAxis>
      </Intraday>
    </Page>
  );
}
export default App;
